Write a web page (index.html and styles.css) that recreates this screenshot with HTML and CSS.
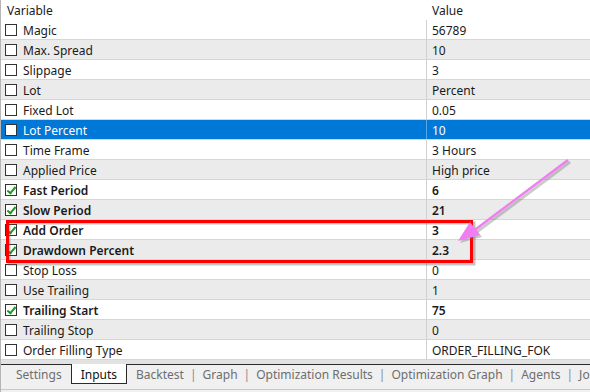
FILE: index.html
```html
<!DOCTYPE html>
<html lang="en">
<head>
  <meta charset="UTF-8" />
  <title>Inputs</title>
  <link rel="stylesheet" href="styles.css">
</head>
<body>
  <div class="window">
    <div class="side"></div>
    <div class="main">
      <div class="grid">
        <div class="row head">
          <div class="cell name">Variable</div>
          <div class="cell val">Value</div>
        </div>
        <div class="row"><div class="cell name"><span class="box"></span>Magic</div><div class="cell val">56789</div></div>
        <div class="row alt"><div class="cell name"><span class="box"></span>Max. Spread</div><div class="cell val">10</div></div>
        <div class="row"><div class="cell name"><span class="box"></span>Slippage</div><div class="cell val">3</div></div>
        <div class="row alt"><div class="cell name"><span class="box"></span>Lot</div><div class="cell val">Percent</div></div>
        <div class="row"><div class="cell name"><span class="box"></span>Fixed Lot</div><div class="cell val">0.05</div></div>
        <div class="row selected"><div class="cell name"><span class="box"></span>Lot Percent</div><div class="cell val">10</div></div>
        <div class="row"><div class="cell name"><span class="box"></span>Time Frame</div><div class="cell val">3 Hours</div></div>
        <div class="row alt"><div class="cell name"><span class="box"></span>Applied Price</div><div class="cell val">High price</div></div>
        <div class="row on"><div class="cell name"><span class="box checked"></span>Fast Period</div><div class="cell val">6</div></div>
        <div class="row alt on"><div class="cell name"><span class="box checked"></span>Slow Period</div><div class="cell val">21</div></div>
        <div class="row on"><div class="cell name"><span class="box checked"></span>Add Order</div><div class="cell val">3</div></div>
        <div class="row alt on"><div class="cell name"><span class="box checked"></span>Drawdown Percent</div><div class="cell val">2.3</div></div>
        <div class="row"><div class="cell name"><span class="box"></span>Stop Loss</div><div class="cell val">0</div></div>
        <div class="row alt"><div class="cell name"><span class="box"></span>Use Trailing</div><div class="cell val">1</div></div>
        <div class="row on"><div class="cell name"><span class="box checked"></span>Trailing Start</div><div class="cell val">75</div></div>
        <div class="row alt"><div class="cell name"><span class="box"></span>Trailing Stop</div><div class="cell val">0</div></div>
        <div class="row"><div class="cell name"><span class="box"></span>Order Filling Type</div><div class="cell val">ORDER_FILLING_FOK</div></div>
      </div>

      <div class="tabs">
        <span class="tab">Settings</span>
        <span class="tab active">Inputs</span>
        <span class="tab small first">Backtest</span><span class="sep">|</span>
        <span class="tab small">Graph</span><span class="sep">|</span>
        <span class="tab small">Optimization Results</span><span class="sep">|</span>
        <span class="tab small">Optimization Graph</span><span class="sep">|</span>
        <span class="tab small">Agents</span><span class="sep">|</span>
        <span class="tab small">Jo</span>
      </div>
    </div>

    <!-- annotation drawn over the screenshot -->
    <svg class="markup" width="590" height="392" viewBox="0 0 590 392">
      <rect x="9" y="223" width="465" height="41" fill="none" stroke="#555" stroke-opacity="0.35" stroke-width="3"/>
      <rect x="7.5" y="221.5" width="464" height="40" fill="none" stroke="#ff0000" stroke-width="3"/>
      <g stroke="#666" stroke-opacity="0.35" stroke-width="3" fill="#666" fill-opacity="0.35">
        <line x1="570" y1="162" x2="474" y2="234"/>
        <polygon points="460,243 472,224 482,237" stroke="none"/>
      </g>
      <g stroke="#f07ef0" stroke-width="2.5" fill="#f07ef0">
        <line x1="568" y1="160" x2="472" y2="232"/>
        <polygon points="458,241 470,222 480,235" stroke="none"/>
      </g>
    </svg>
  </div>
</body>
</html>
```

FILE: styles.css
```css
* {
  box-sizing: border-box;
}
body {
  margin: 0;
  background: #fff;
  font-family: "Noto Sans", "Open Sans", sans-serif;
  font-size: 12px;
  color: #1a1a1a;
}
.window {
  position: relative;
  width: 590px;
  height: 392px;
  display: flex;
  overflow: hidden;
}
.side {
  width: 4px;
  background: #dde4ec;
  border-right: 1px solid #b5b5b5;
}
.main {
  flex: 1;
  display: flex;
  flex-direction: column;
}
.grid {
  height: 360px;
  border-right: 1px solid #c4c4c4;
  margin-right: 1px;
}
.row {
  display: flex;
  height: 20px;
  border-bottom: 1px solid #d6d6d6;
}
.row.head {
  border-bottom: none;
}
.row.alt {
  background: #ebebeb;
}
.row.selected {
  background: #0078d7;
  color: #fff;
}
.row.on {
  font-weight: 600;
}
.cell {
  display: flex;
  align-items: center;
  line-height: 19px;
  padding-top: 1px;
  white-space: nowrap;
}
.name {
  width: 425px;
  padding-left: 4px;
}
.head .name {
  padding-left: 6px;
}
.val {
  flex: 1;
  padding-left: 5px;
  border-left: 1px solid #d0d0d0;
}
.head .val {
  border-left-color: transparent;
}
.selected .val {
  border-left-color: #5aa6e6;
}
.box {
  width: 12px;
  height: 12px;
  border: 1px solid #333;
  background: #fff;
  margin-right: 6px;
  position: relative;
  flex: none;
}
.box.checked::after {
  content: "";
  position: absolute;
  left: 3px;
  top: 0px;
  width: 3px;
  height: 7px;
  border: solid #1e9a1e;
  border-width: 0 2px 2px 0;
  transform: rotate(40deg);
}
.tabs {
  flex: 1;
  background: #f0f0f0;
  border-top: 4px solid #e2e2e2;
  display: flex;
  align-items: flex-start;
  padding-left: 6px;
  color: #6e6e6e;
  font-size: 12px;
  white-space: nowrap;
  position: relative;
}
.tabs::before {
  content: "";
  position: absolute;
  left: 0;
  right: 0;
  top: 0;
  border-top: 1px solid #2a2a2a;
}
.tabs::after {
  content: "";
  position: absolute;
  left: 0;
  right: 0;
  bottom: 2px;
  border-top: 1px solid #c8c8c8;
}
.tab {
  padding: 2px 9px 0;
  height: 20px;
  line-height: 18px;
}
.tab.small {
  padding-left: 6px;
  padding-right: 6px;
}
.tab.first {
  margin-left: 3px;
}
.tab.active {
  background: #fff;
  color: #111;
  border: 1px solid #2a2a2a;
  border-top: none;
  position: relative;
  z-index: 1;
}
.sep {
  padding-top: 2px;
  line-height: 18px;
  color: #8a8a8a;
}
.markup {
  position: absolute;
  left: 0;
  top: 0;
  pointer-events: none;
}
```
